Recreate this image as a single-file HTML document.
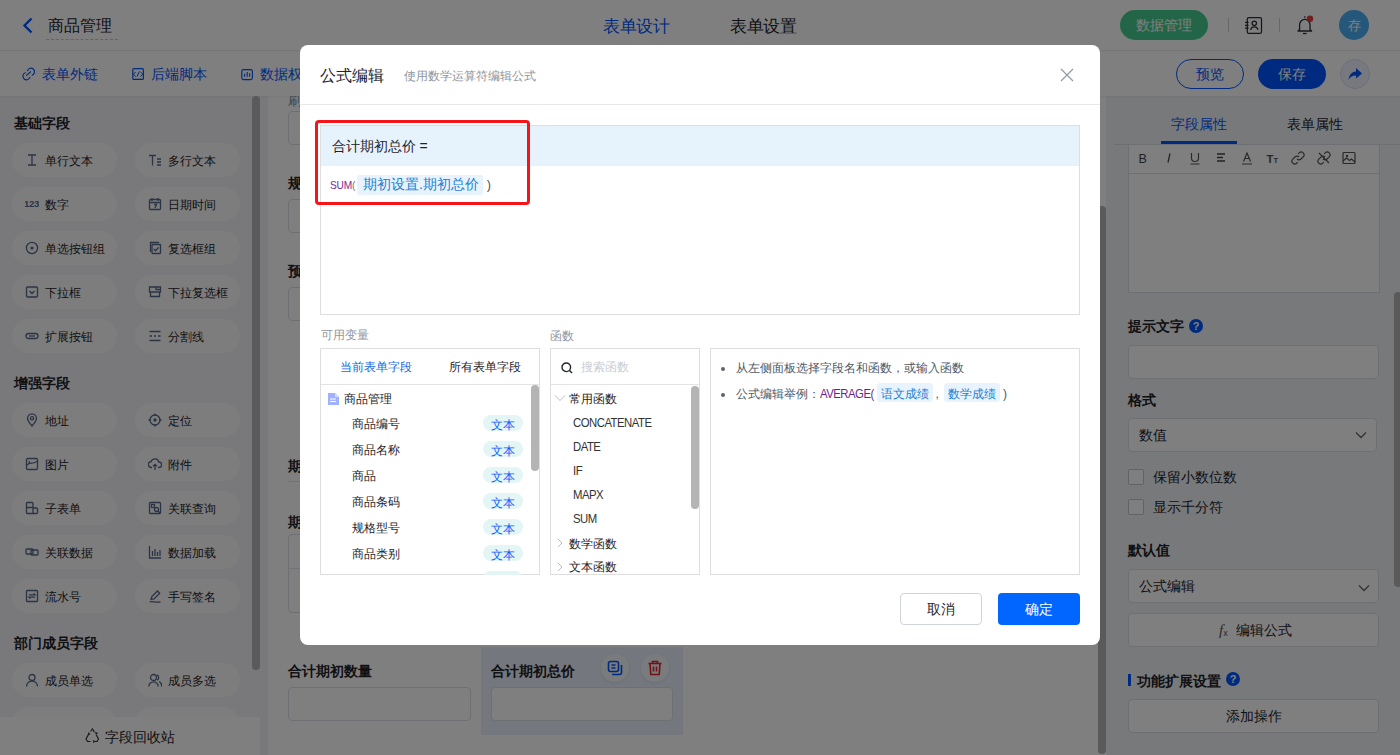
<!DOCTYPE html>
<html><head><meta charset="utf-8">
<style>
*{box-sizing:border-box}
html,body{margin:0;padding:0}
body{width:1400px;height:755px;overflow:hidden;position:relative;background:#fff;font-family:"Liberation Sans",sans-serif;color:#1f2329}
.a{position:absolute;white-space:nowrap}
.t14{font-size:14px;line-height:20px}
.t12{font-size:12px;line-height:20px}
.t16{font-size:16px;line-height:20px}
.b{font-weight:bold}
svg{display:block}
/* header */
#hdr{left:0;top:0;width:1400px;height:51px;background:#fff;border-bottom:1px solid #ececec}
#tb{left:0;top:51px;width:1400px;height:45px;background:#fff;box-shadow:0 1px 2px rgba(0,0,0,.06);z-index:1}
#left{left:0;top:96px;width:268px;height:659px;background:#f2f3f6}
.pill{position:absolute;width:105px;height:34px;border-radius:17px;background:#fbfbfc}
.pill .ic{position:absolute;left:12.5px;top:9.5px}
.pill span{position:absolute;left:33px;top:7.5px;font-size:12px;line-height:20px;color:#1f2329}
.sec{position:absolute;margin-top:-1px;left:14px;font-size:14px;line-height:20px;font-weight:bold;color:#1f2329}
#canvas{left:268px;top:96px;width:838px;height:659px;background:#fff}
#right{left:1106px;top:96px;width:294px;height:659px;background:#f0f2f6}
.inp{position:absolute;border:1px solid #dcdfe6;border-radius:4px;background:#fff}
#mask{left:0;top:0;width:1400px;height:755px;background:rgba(0,0,0,.5);z-index:5}
#modal{left:300px;top:45px;width:800px;height:600px;background:#fff;border-radius:8px;z-index:6}
</style></head><body>

<!-- ============ HEADER ============ -->
<div id="hdr" class="a">
  <svg class="a" style="left:22px;top:17px" width="12" height="17" viewBox="0 0 12 17"><path d="M9.5 1.5 L2.5 8.5 L9.5 15.5" fill="none" stroke="#0055ff" stroke-width="2.4"/></svg>
  <div class="a t16" style="left:48px;top:16px;color:#1f2329">商品管理</div>
  <div class="a" style="left:46px;top:39px;width:72px;border-top:1px dashed #c8c8c8"></div>
  <div class="a t16" style="left:603px;top:16px;color:#0055ff;font-size:16.5px;letter-spacing:-0.4px">表单设计</div>
  <div class="a t16" style="left:730px;top:16px;color:#1f2329;font-size:16.5px;letter-spacing:-0.4px">表单设置</div>
  <div class="a" style="left:1120px;top:10px;width:88px;height:30px;border-radius:15px;background:#45cc8e;color:#fff;font-size:14px;line-height:30px;text-align:center">数据管理</div>
  <div class="a" style="left:1228px;top:18px;width:1px;height:14px;background:#d0d0d0"></div>
  <svg class="a" style="left:1240px;top:10px" width="30" height="30" viewBox="1240 10 30 30" fill="none" stroke="#2b2f36" stroke-width="1.25"><rect x="1247.3" y="17.6" width="14.2" height="15.8" rx="1.5"/><path d="M1245 22.4h3.6M1245 25.3h3.6M1245 28.2h3.6"/><circle cx="1254.3" cy="23.3" r="2.2"/><path d="M1250.6 29.8a3.8 3.8 0 0 1 7.4 0"/></svg>
  <div class="a" style="left:1279px;top:18px;width:1px;height:14px;background:#d0d0d0"></div>
  <svg class="a" style="left:1290px;top:10px" width="30" height="30" viewBox="1290 10 30 30" fill="none" stroke="#2b2f36" stroke-width="1.3"><path d="M1299.6 29.6V24.6a5.2 5.2 0 0 1 10.4 0V29.6l1.6 1.4h-13.6z" stroke-linejoin="round"/><path d="M1303 33.5h3.6"/><path d="M1304.8 16.2v1.6"/><circle cx="1310" cy="18.8" r="3.2" fill="#e23c3c" stroke="none"/></svg>
  <div class="a" style="left:1339px;top:10px;width:30px;height:30px;border-radius:15px;background:#48aef2;color:#fff;font-size:13px;line-height:31px;text-align:center">存</div>
</div>

<!-- ============ TOOLBAR ============ -->
<div id="tb" class="a">
  <svg class="a" style="left:20px;top:14px" width="17" height="17" viewBox="20 65 17 17" fill="none" stroke="#0055ff" stroke-width="1.15" stroke-linecap="round"><path d="M27.5 70.6A3.6 3.6 0 1 1 32.1 75.2"/><path d="M29.9 77.4A3.6 3.6 0 1 1 25.3 72.8"/><path d="M26.6 75.4L30.6 71.8"/></svg>
  <div class="a t14" style="left:42px;top:13px;color:#0055ff">表单外链</div>
  <svg class="a" style="left:130px;top:15px" width="16" height="16" viewBox="130 66 16 16" fill="none" stroke="#0055ff" stroke-width="1.15"><rect x="132.8" y="68.6" width="10.6" height="10.8" rx="1"/><path d="M135.6 72l-2.3 2.3 2.5 2.2M140.5 72l2.4 2.3-2.4 2.1M139.4 71.4l-2.4 5.2" stroke-width="1"/></svg>
  <div class="a t14" style="left:151px;top:13px;color:#0055ff">后端脚本</div>
  <svg class="a" style="left:239px;top:15px" width="16" height="16" viewBox="239 66 16 16" fill="none" stroke="#0055ff" stroke-width="1.15"><rect x="241.8" y="69.6" width="10.6" height="10" rx="1.8"/><path d="M244.6 73.8v3M247.2 72v4.8M249.6 73.2v3.6" stroke-width="1.1"/></svg>
  <div class="a t14" style="left:260px;top:13px;color:#0055ff">数据权限</div>
  <div class="a" style="left:1176px;top:8px;width:68px;height:30px;border-radius:15px;border:1px solid #0055ff;color:#0055ff;font-size:14px;line-height:28px;text-align:center">预览</div>
  <div class="a" style="left:1258px;top:8px;width:68px;height:30px;border-radius:15px;background:#0055ff;color:#fff;font-size:14px;line-height:30px;text-align:center">保存</div>
  <div class="a" style="left:1340px;top:8px;width:30px;height:30px;border-radius:15px;border:1px solid #d5dff2;background:#eef3fe"></div>
  <svg class="a" style="left:1347px;top:15px" width="16" height="16" viewBox="0 0 16 16"><path d="M9 2 L15 7.5 L9 12.5 V9.5 C5 9.5 3 11 1.5 14 C2 9 4.5 5.8 9 5.5 Z" fill="#0055ff"/></svg>
</div>

<!-- ============ LEFT PANEL ============ -->
<div id="left" class="a">
<div class="sec" style="top:18px">基础字段</div>
<div class="pill" style="left:12px;top:47px"><svg class="ic" width="14" height="14" viewBox="0 0 14 14" fill="none" stroke="#56688a" stroke-width="1.3"><path d="M3 2h8M3 12h8M7 2v10"/></svg><span>单行文本</span></div>
<div class="pill" style="left:135px;top:47px"><svg class="ic" width="14" height="14" viewBox="0 0 14 14" fill="none" stroke="#56688a" stroke-width="1.3"><path d="M1 2.5h7M4.5 2.5v10M9 6h4M9 9h4M9 12h4"/></svg><span>多行文本</span></div>
<div class="pill" style="left:12px;top:91px"><svg class="ic" width="14" height="14" viewBox="0 0 14 14" fill="none" stroke="#56688a" stroke-width="1.3"><text x="-1" y="9.8" font-size="9.6" font-weight="bold" letter-spacing="-0.3" fill="#56688a" stroke="none" font-family="Liberation Sans">123</text></svg><span>数字</span></div>
<div class="pill" style="left:135px;top:91px"><svg class="ic" width="14" height="14" viewBox="0 0 14 14" fill="none" stroke="#56688a" stroke-width="1.3"><rect x="1.5" y="2.5" width="11" height="10" rx="1"/><path d="M4 1v3M10 1v3M1.5 5.5h11M6 7.5h2.5L7 11"/></svg><span>日期时间</span></div>
<div class="pill" style="left:12px;top:135px"><svg class="ic" width="14" height="14" viewBox="0 0 14 14" fill="none" stroke="#56688a" stroke-width="1.3"><circle cx="7" cy="7" r="5.6"/><circle cx="7" cy="7" r="1.6" fill="#56688a" stroke="none"/></svg><span>单选按钮组</span></div>
<div class="pill" style="left:135px;top:135px"><svg class="ic" width="14" height="14" viewBox="0 0 14 14" fill="none" stroke="#56688a" stroke-width="1.3"><path d="M2.5 11V1.5H11"/><rect x="4" y="3.5" width="8.5" height="9" rx="0.5"/><path d="M5.8 8l1.8 1.8 3-3.4"/></svg><span>复选框组</span></div>
<div class="pill" style="left:12px;top:179px"><svg class="ic" width="14" height="14" viewBox="0 0 14 14" fill="none" stroke="#56688a" stroke-width="1.3"><rect x="1.5" y="2" width="11" height="10" rx="1"/><path d="M4.5 6l2.5 2.5L9.5 6"/></svg><span>下拉框</span></div>
<div class="pill" style="left:135px;top:179px"><svg class="ic" width="14" height="14" viewBox="0 0 14 14" fill="none" stroke="#56688a" stroke-width="1.3"><path d="M1.5 2h11v5h-11zM2.5 7v4.5h9V7"/><path d="M8 2v2.5h4.5"/></svg><span>下拉复选框</span></div>
<div class="pill" style="left:12px;top:223px"><svg class="ic" width="14" height="14" viewBox="0 0 14 14" fill="none" stroke="#56688a" stroke-width="1.3"><rect x="1" y="4.5" width="12" height="5" rx="2.5"/><path d="M4 7h6"/></svg><span>扩展按钮</span></div>
<div class="pill" style="left:135px;top:223px"><svg class="ic" width="14" height="14" viewBox="0 0 14 14" fill="none" stroke="#56688a" stroke-width="1.3"><path d="M1.5 2.5h11M1.5 11.5h11M1.5 7h2.5M6 7h2M10 7h2.5"/></svg><span>分割线</span></div>
<div class="sec" style="top:278px">增强字段</div>
<div class="pill" style="left:12px;top:307px"><svg class="ic" width="14" height="14" viewBox="0 0 14 14" fill="none" stroke="#56688a" stroke-width="1.3"><path d="M7 13C3.5 9 2.5 7.3 2.5 5.3a4.5 4.5 0 0 1 9 0c0 2-1 3.7-4.5 7.7z"/><circle cx="7" cy="5.3" r="1.6"/></svg><span>地址</span></div>
<div class="pill" style="left:135px;top:307px"><svg class="ic" width="14" height="14" viewBox="0 0 14 14" fill="none" stroke="#56688a" stroke-width="1.3"><circle cx="7" cy="7" r="5"/><path d="M7 0.5v2.5M7 11v2.5M0.5 7H3M11 7h2.5"/><circle cx="7" cy="7" r="1" fill="#56688a"/></svg><span>定位</span></div>
<div class="pill" style="left:12px;top:351px"><svg class="ic" width="14" height="14" viewBox="0 0 14 14" fill="none" stroke="#56688a" stroke-width="1.3"><rect x="1.5" y="1.5" width="11" height="11" rx="1.2"/><path d="M1.5 8.2L4.5 6.2Q8 6.8 12.5 4.3M4.3 4v2.2"/></svg><span>图片</span></div>
<div class="pill" style="left:135px;top:351px"><svg class="ic" width="14" height="14" viewBox="0 0 14 14" fill="none" stroke="#56688a" stroke-width="1.3"><path d="M4 10.5H3.5a3 3 0 0 1-.3-6 4 4 0 0 1 7.7.5 2.7 2.7 0 0 1 0 5.5H10"/><path d="M7 13V7.5M5 9.3L7 7.3l2 2"/></svg><span>附件</span></div>
<div class="pill" style="left:12px;top:395px"><svg class="ic" width="14" height="14" viewBox="0 0 14 14" fill="none" stroke="#56688a" stroke-width="1.3"><path d="M8 12.5H2.5a1 1 0 0 1-1-1v-9a1 1 0 0 1 1-1h4.5a1 1 0 0 1 1 1v10z"/><path d="M1.5 6.5H8M8 7h3.5a1 1 0 0 1 1 1v3.5a1 1 0 0 1-1 1H8"/></svg><span>子表单</span></div>
<div class="pill" style="left:135px;top:395px"><svg class="ic" width="14" height="14" viewBox="0 0 14 14" fill="none" stroke="#56688a" stroke-width="1.3"><rect x="1.5" y="1.5" width="11" height="11" rx="1"/><rect x="3.5" y="3.5" width="3" height="3"/><circle cx="8.5" cy="8.5" r="2"/><path d="M10 10l2 2"/></svg><span>关联查询</span></div>
<div class="pill" style="left:12px;top:439px"><svg class="ic" width="14" height="14" viewBox="0 0 14 14" fill="none" stroke="#56688a" stroke-width="1.3"><rect x="1" y="4" width="7" height="5" rx="1"/><rect x="6" y="5" width="7" height="5" rx="1"/></svg><span>关联数据</span></div>
<div class="pill" style="left:135px;top:439px"><svg class="ic" width="14" height="14" viewBox="0 0 14 14" fill="none" stroke="#56688a" stroke-width="1.3"><path d="M1.5 1v12h11.5M4.5 6v5M7 4v7M9.5 7v4M12 5v6"/></svg><span>数据加载</span></div>
<div class="pill" style="left:12px;top:483px"><svg class="ic" width="14" height="14" viewBox="0 0 14 14" fill="none" stroke="#56688a" stroke-width="1.3"><rect x="1.5" y="1.5" width="11" height="11" rx="1"/><path d="M4 5.8h6L8.6 4.5M10 8.2H4l1.4 1.3"/></svg><span>流水号</span></div>
<div class="pill" style="left:135px;top:483px"><svg class="ic" width="14" height="14" viewBox="0 0 14 14" fill="none" stroke="#56688a" stroke-width="1.3"><path d="M3 10.5l.8-3L9.5 2l2.2 2.2L6 10z"/><path d="M1.5 13c3-1 4 .5 11 0"/></svg><span>手写签名</span></div>
<div class="sec" style="top:538px">部门成员字段</div>
<div class="pill" style="left:12px;top:567px"><svg class="ic" width="14" height="14" viewBox="0 0 14 14" fill="none" stroke="#56688a" stroke-width="1.3"><circle cx="7" cy="4.5" r="3"/><path d="M1.5 13.5a5.5 5.5 0 0 1 11 0"/></svg><span>成员单选</span></div>
<div class="pill" style="left:135px;top:567px"><svg class="ic" width="14" height="14" viewBox="0 0 14 14" fill="none" stroke="#56688a" stroke-width="1.3"><circle cx="5.5" cy="4.5" r="3"/><path d="M0.8 13.5a4.7 4.7 0 0 1 9.4 0M9 1.8a3 3 0 0 1 0 5.4M11 8.5a4.7 4.7 0 0 1 2.5 5"/></svg><span>成员多选</span></div>
<div class="pill" style="left:12px;top:611px"><span>部门单选</span></div>
<div class="pill" style="left:135px;top:611px"><span>部门多选</span></div>
<div class="a" style="left:252px;top:0;width:8px;height:574px;border-radius:4px;background:#b4b4b4"></div>
<div class="a" style="left:0;top:621px;width:260px;height:38px;background:#fff"></div>
<svg class="a" style="left:85px;top:632px" width="15" height="15" viewBox="0 0 15 15" fill="none" stroke="#333" stroke-width="1.2"><path d="M5.5 3.5L7.5 1l2 3.3M11 6.5l2.5 4.5-1.5 2.5H9M5.5 13.5H2.5L1 11l2.2-4"/><path d="M8.3 12.3l.9 1.2-.9 1.1M12.8 5l-1.6.6-.6-1.5M3.5 4.5l.9 1.6-1.6.5"/></svg>
<div class="a t14" style="left:105px;top:631px;color:#1f2329">字段回收站</div>
</div>

<!-- ============ CANVAS ============ -->
<div id="canvas" class="a" style="overflow:hidden">
<div class="a" style="left:20px;top:-6.3px;font-size:14px;line-height:20px;color:#86909c">刷新规则</div>
<div class="inp" style="left:20px;top:15px;width:500px;height:34px;"></div>
<div class="a" style="left:20px;top:77.2px;font-size:14px;line-height:20px;font-weight:bold;color:#1f2329">规格型号</div>
<div class="inp" style="left:20px;top:103px;width:500px;height:34px;"></div>
<div class="a" style="left:20px;top:165.2px;font-size:14px;line-height:20px;font-weight:bold;color:#1f2329">预计到货</div>
<div class="inp" style="left:20px;top:191px;width:500px;height:34px;"></div>
<div class="a" style="left:20px;top:360.2px;font-size:14px;line-height:20px;font-weight:bold;color:#1f2329">期初设置</div>
<div class="a" style="left:20px;top:385px;width:790px;height:1px;background:#e5e6eb"></div>
<div class="a" style="left:20px;top:415.7px;font-size:14px;line-height:20px;font-weight:bold;color:#1f2329">期初明细</div>
<div class="inp" style="left:20px;top:438px;width:790px;height:79px;"></div>
<div class="a" style="left:21px;top:472px;width:788px;height:1px;background:#e5e6eb"></div>
<div class="a" style="left:213px;top:551px;width:202px;height:88px;background:#e8effc"></div>
<div class="a" style="left:20px;top:564.7px;font-size:14px;line-height:20px;font-weight:bold;color:#1f2329">合计期初数量</div>
<div class="inp" style="left:20px;top:591px;width:183px;height:34px;"></div>
<div class="a" style="left:223px;top:564.7px;font-size:14px;line-height:20px;font-weight:bold;color:#1f2329">合计期初总价</div>
<div class="inp" style="left:223px;top:591px;width:182px;height:34px;"></div>
<div class="a" style="left:333px;top:558px;width:28px;height:28px;border-radius:14px;background:#f4f6fa;box-shadow:0 1px 3px rgba(0,0,0,.08)"></div>
<svg class="a" style="left:339px;top:564px" width="16" height="16" viewBox="0 0 16 16" fill="none" stroke="#0055ff" stroke-width="1.6"><rect x="1.5" y="1.5" width="10" height="10" rx="2"/><path d="M4.5 5h4M4.5 8h4"/><path d="M14.5 5v7.5a2 2 0 0 1-2 2H5"/></svg>
<div class="a" style="left:373px;top:558px;width:28px;height:28px;border-radius:14px;background:#f4f6fa;box-shadow:0 1px 3px rgba(0,0,0,.08)"></div>
<svg class="a" style="left:379px;top:564px" width="16" height="16" viewBox="0 0 16 16" fill="none" stroke="#e0262f" stroke-width="1.6"><path d="M1.5 3.5h13M5.5 3.5V1.5h5v2M3 3.5l.8 11h8.4l.8-11M6.5 6.5v5M9.5 6.5v5"/></svg>
<div class="a" style="left:830px;top:110px;width:8px;height:548px;border-radius:4px;background:#b4b4b4"></div>
</div>

<!-- ============ RIGHT PANEL ============ -->
<div id="right" class="a" style="overflow:hidden">
<div class="a" style="left:65.4px;top:18.3px;font-size:14px;line-height:20px;color:#0055ff">字段属性</div>
<div class="a" style="left:181.0px;top:18.3px;font-size:14px;line-height:20px;color:#1f2329">表单属性</div>
<div class="a" style="left:8px;top:48px;width:286px;height:1px;background:#dcdfe6"></div>
<div class="a" style="left:55px;top:45px;width:76px;height:3px;background:#0055ff"></div>
<div class="a" style="left:22px;top:49px;width:252px;height:148px;border:1px solid #dcdfe6;border-top:none;background:#fff"></div>
<div class="a" style="left:22px;top:49px;width:252px;height:29px;border:1px solid #dcdfe6;border-top:none;background:#fff"></div>
<svg class="a" style="left:31px;top:55px" width="14" height="14" viewBox="0 0 14 14"><text x="1.5" y="12" font-size="12.5" fill="#444" font-family="Liberation Sans">B</text></svg>
<svg class="a" style="left:56px;top:55px" width="14" height="14" viewBox="0 0 14 14"><path d="M8 2.5L6 11.5" stroke="#555" stroke-width="1.4"/></svg>
<svg class="a" style="left:82px;top:55px" width="14" height="14" viewBox="0 0 14 14"><path d="M3.5 2v5a3.5 3.5 0 0 0 7 0V2M2.5 13h9" stroke="#555" stroke-width="1.2" fill="none"/></svg>
<svg class="a" style="left:108px;top:55px" width="14" height="14" viewBox="0 0 14 14"><path d="M3 3h8M3 6.5h6M3 10h8" stroke="#444" stroke-width="1.3"/></svg>
<svg class="a" style="left:134px;top:55px" width="14" height="14" viewBox="0 0 14 14"><path d="M3.5 10.5L7 2l3.5 8.5M4.8 7.5h4.4M2 13h10" stroke="#555" stroke-width="1.2" fill="none"/></svg>
<svg class="a" style="left:160px;top:55px" width="14" height="14" viewBox="0 0 14 14"><text x="0.5" y="11.5" font-size="11.5" fill="#555" font-family="Liberation Sans" font-weight="bold">T</text><text x="7.5" y="12" font-size="7.5" fill="#555" font-family="Liberation Sans" font-weight="bold">T</text></svg>
<svg class="a" style="left:185px;top:55px" width="14" height="14" viewBox="0 0 14 14"><path d="M6 8a2.8 2.8 0 0 0 4 0l2.2-2.2a2.8 2.8 0 0 0-4-4L7.2 2.8M8 6a2.8 2.8 0 0 0-4 0L1.8 8.2a2.8 2.8 0 0 0 4 4l1-1" stroke="#555" stroke-width="1.2" fill="none"/></svg>
<svg class="a" style="left:211px;top:55px" width="14" height="14" viewBox="0 0 14 14"><path d="M6 8a2.8 2.8 0 0 0 4 0l2.2-2.2a2.8 2.8 0 0 0-4-4L7.2 2.8M8 6a2.8 2.8 0 0 0-4 0L1.8 8.2a2.8 2.8 0 0 0 4 4l1-1M2 2l10 10" stroke="#555" stroke-width="1.2" fill="none"/></svg>
<svg class="a" style="left:236px;top:55px" width="14" height="14" viewBox="0 0 14 14"><rect x="1" y="1.5" width="12" height="11" rx="1" stroke="#555" stroke-width="1.2" fill="none"/><path d="M1 10l3.5-3 3 2.5 2-1.5 3.5 3" stroke="#555" stroke-width="1.2" fill="none"/><circle cx="5" cy="5" r="1.2" fill="#555"/></svg>
<div class="a" style="left:22.0px;top:220.2px;font-size:14px;line-height:20px;font-weight:bold;color:#1f2329">提示文字</div>
<div class="a" style="left:83px;top:223px;width:14px;height:14px;border-radius:7px;background:#0055ff;color:#fff;font-size:11px;line-height:14px;text-align:center;font-weight:bold">?</div>
<div class="inp" style="left:22px;top:249px;width:251px;height:34px;"></div>
<div class="a" style="left:22.0px;top:293.8px;font-size:14px;line-height:20px;font-weight:bold;color:#1f2329">格式</div>
<div class="inp" style="left:22px;top:322px;width:249px;height:34px;"></div>
<div class="a" style="left:33.0px;top:328.5px;font-size:14px;line-height:20px;color:#1f2329">数值</div>
<svg class="a" style="left:249px;top:335px" width="12" height="8" viewBox="0 0 12 8"><path d="M1 1.5l5 5 5-5" fill="none" stroke="#666" stroke-width="1.3"/></svg>
<div class="a" style="left:22px;top:373px;width:16px;height:16px;border:1px solid #c0c4cc;border-radius:2px;background:#fff"></div>
<div class="a" style="left:46.5px;top:371.4px;font-size:14px;line-height:20px;color:#1f2329">保留小数位数</div>
<div class="a" style="left:22px;top:403px;width:16px;height:16px;border:1px solid #c0c4cc;border-radius:2px;background:#fff"></div>
<div class="a" style="left:46.5px;top:401.4px;font-size:14px;line-height:20px;color:#1f2329">显示千分符</div>
<div class="a" style="left:22.0px;top:444.4px;font-size:14px;line-height:20px;font-weight:bold;color:#1f2329">默认值</div>
<div class="inp" style="left:22px;top:473px;width:251px;height:34px;"></div>
<div class="a" style="left:33.0px;top:479.7px;font-size:14px;line-height:20px;color:#1f2329">公式编辑</div>
<svg class="a" style="left:252px;top:488px" width="12" height="8" viewBox="0 0 12 8"><path d="M1 1.5l5 5 5-5" fill="none" stroke="#666" stroke-width="1.3"/></svg>
<div class="inp" style="left:22px;top:517px;width:251px;height:34px;"></div>
<div class="a" style="left:113px;top:524px;font-family:'Liberation Serif',serif;font-style:italic;font-size:15px;line-height:20px;color:#555">f<span style="font-size:9px;font-style:normal;font-family:'Liberation Sans';vertical-align:-1px">x</span></div>
<div class="a" style="left:129.5px;top:524.0px;font-size:14px;line-height:20px;color:#1f2329">编辑公式</div>
<div class="a" style="left:22px;top:578px;width:3px;height:12px;background:#0055ff"></div>
<div class="a" style="left:31.0px;top:574.7px;font-size:14px;line-height:20px;font-weight:bold;color:#1f2329">功能扩展设置</div>
<div class="a" style="left:120px;top:576px;width:14px;height:14px;border-radius:7px;background:#0055ff;color:#fff;font-size:11px;line-height:14px;text-align:center;font-weight:bold">?</div>
<div class="inp" style="left:22px;top:603px;width:251px;height:34px;"></div>
<div class="a" style="left:120.0px;top:610.2px;font-size:14px;line-height:20px;color:#1f2329">添加操作</div>
<div class="a" style="left:288px;top:196px;width:8px;height:295px;border-radius:4px;background:#b4b4b4"></div>
</div>

<div id="mask" class="a"></div>

<!-- ============ MODAL ============ -->
<div id="modal" class="a" style="overflow:hidden">
<div class="a" style="left:0;top:-1px;width:800px;height:601px">
<div class="a" style="left:20.4px;top:21.8px;font-size:16px;line-height:20px;color:#1f2329;">公式编辑</div>
<div class="a" style="left:104.4px;top:22.1px;font-size:12px;line-height:20px;color:#8f959e;">使用数学运算符编辑公式</div>
<svg class="a" style="left:760px;top:24px" width="14" height="14" viewBox="0 0 14 14"><path d="M1 1l12 12M13 1L1 13" stroke="#9298a0" stroke-width="1.2"/></svg>
<div class="a" style="left:0px;top:60px;width:800px;height:1px;background:#e8e8e8"></div>
<div class="a" style="left:20px;top:81px;width:760px;height:190px;border:1px solid #dedede;background:#fff"></div>
<div class="a" style="left:21px;top:82px;width:758px;height:40px;background:#e6f3fd"></div>
<div class="a" style="left:31.6px;top:92.1px;font-size:14px;line-height:20px;color:#1f2329;">合计期初总价 =</div>
<div class="a" style="left:30px;top:132px;font-size:10.2px;line-height:20px;color:#7c2b93;letter-spacing:-0.2px">SUM<span style="color:#777">(</span></div>
<div class="a" style="left:57px;top:131px;width:126px;height:20px;background:#e8f3fd;border-radius:2px"></div>
<div class="a" style="left:63.0px;top:130.1px;font-size:14px;line-height:20px;color:#1b7fd4;">期初设置.期初总价</div>
<div class="a" style="left:185px;top:131.5px;font-family:'Liberation Mono',monospace;font-size:12px;line-height:20px;color:#555">)</div>
<div class="a" style="left:15px;top:76px;width:215px;height:85px;border:3px solid #f5141a;border-radius:4px"></div>
<div class="a" style="left:20.6px;top:280.8px;font-size:12px;line-height:20px;color:#8f959e;">可用变量</div>
<div class="a" style="left:20px;top:304px;width:220px;height:227px;border:1px solid #dedede"></div>
<div class="a" style="left:40.0px;top:313.3px;font-size:12px;line-height:20px;color:#1668e3;">当前表单字段</div>
<div class="a" style="left:148.5px;top:313.3px;font-size:12px;line-height:20px;color:#1f2329;">所有表单字段</div>
<div class="a" style="left:21px;top:340px;width:218px;height:1px;background:#e3e3e3"></div>
<div class="a" style="left:231px;top:341px;width:8px;height:86px;background:#b4b4b4;border-radius:4px"></div>
<svg class="a" style="left:28px;top:349px" width="11" height="12" viewBox="0 0 11 12"><path d="M0 0h7l4 4v8H0z" fill="#9fb1ff"/><path d="M2 6h6M2 8.5h6" stroke="#fff" stroke-width="1.1"/><path d="M7 0v4h4" fill="#d5ddff"/></svg>
<div class="a" style="left:44.3px;top:344.7px;font-size:12px;line-height:20px;color:#1f2329;">商品管理</div>
<div class="a" style="left:52.2px;top:370.3px;font-size:12px;line-height:20px;color:#1f2329;">商品编号</div>
<div class="a" style="left:183px;top:371px;width:40px;height:16px;background:#e3f6f5;border-radius:8px"></div>
<div class="a" style="left:191.0px;top:370.8px;font-size:12px;line-height:20px;color:#0f62fe;">文本</div>
<div class="a" style="left:52.2px;top:396.3px;font-size:12px;line-height:20px;color:#1f2329;">商品名称</div>
<div class="a" style="left:183px;top:397px;width:40px;height:16px;background:#e3f6f5;border-radius:8px"></div>
<div class="a" style="left:191.0px;top:396.8px;font-size:12px;line-height:20px;color:#0f62fe;">文本</div>
<div class="a" style="left:52.2px;top:422.3px;font-size:12px;line-height:20px;color:#1f2329;">商品</div>
<div class="a" style="left:183px;top:423px;width:40px;height:16px;background:#e3f6f5;border-radius:8px"></div>
<div class="a" style="left:191.0px;top:422.8px;font-size:12px;line-height:20px;color:#0f62fe;">文本</div>
<div class="a" style="left:52.2px;top:448.3px;font-size:12px;line-height:20px;color:#1f2329;">商品条码</div>
<div class="a" style="left:183px;top:449px;width:40px;height:16px;background:#e3f6f5;border-radius:8px"></div>
<div class="a" style="left:191.0px;top:448.8px;font-size:12px;line-height:20px;color:#0f62fe;">文本</div>
<div class="a" style="left:52.2px;top:474.3px;font-size:12px;line-height:20px;color:#1f2329;">规格型号</div>
<div class="a" style="left:183px;top:475px;width:40px;height:16px;background:#e3f6f5;border-radius:8px"></div>
<div class="a" style="left:191.0px;top:474.8px;font-size:12px;line-height:20px;color:#0f62fe;">文本</div>
<div class="a" style="left:52.2px;top:500.3px;font-size:12px;line-height:20px;color:#1f2329;">商品类别</div>
<div class="a" style="left:183px;top:501px;width:40px;height:16px;background:#e3f6f5;border-radius:8px"></div>
<div class="a" style="left:191.0px;top:500.8px;font-size:12px;line-height:20px;color:#0f62fe;">文本</div>
<div class="a" style="left:183px;top:527px;width:40px;height:16px;background:#e3f6f5;border-radius:8px"></div>
<div class="a" style="left:21px;top:531px;width:218px;height:30px;background:#fff"></div>
<div class="a" style="left:250.2px;top:281.5px;font-size:12px;line-height:20px;color:#8f959e;">函数</div>
<div class="a" style="left:250px;top:304px;width:150px;height:227px;border:1px solid #dedede"></div>
<svg class="a" style="left:261px;top:318px" width="12" height="12" viewBox="0 0 12 12"><circle cx="5.3" cy="5.3" r="4.3" fill="none" stroke="#1f2329" stroke-width="1.4"/><path d="M8.5 8.5l2.5 2.5" stroke="#1f2329" stroke-width="1.4"/></svg>
<div class="a" style="left:281.0px;top:312.9px;font-size:12px;line-height:20px;color:#c9cdd4;">搜索函数</div>
<div class="a" style="left:251px;top:340px;width:148px;height:1px;background:#e3e3e3"></div>
<div class="a" style="left:391px;top:342px;width:8px;height:123px;background:#b4b4b4;border-radius:4px"></div>
<svg class="a" style="left:254px;top:350px" width="12" height="8" viewBox="0 0 12 8"><path d="M1 1.5l5 5 5-5" fill="none" stroke="#b8bcc4" stroke-width="1"/></svg>
<div class="a" style="left:269.3px;top:344.5px;font-size:12px;line-height:20px;color:#1f2329;">常用函数</div>
<div class="a" style="left:273px;top:368.7px;font-size:12.6px;line-height:20px;color:#333;letter-spacing:-0.55px;transform:scaleX(0.9);transform-origin:0 0">CONCATENATE</div>
<div class="a" style="left:273px;top:392.7px;font-size:12.6px;line-height:20px;color:#333;letter-spacing:-0.55px;transform:scaleX(0.9);transform-origin:0 0">DATE</div>
<div class="a" style="left:273px;top:416.7px;font-size:12.6px;line-height:20px;color:#333;letter-spacing:-0.55px;transform:scaleX(0.9);transform-origin:0 0">IF</div>
<div class="a" style="left:273px;top:440.7px;font-size:12.6px;line-height:20px;color:#333;letter-spacing:-0.55px;transform:scaleX(0.9);transform-origin:0 0">MAPX</div>
<div class="a" style="left:273px;top:464.7px;font-size:12.6px;line-height:20px;color:#333;letter-spacing:-0.55px;transform:scaleX(0.9);transform-origin:0 0">SUM</div>
<svg class="a" style="left:257px;top:494.4px" width="6" height="10" viewBox="0 0 6 10"><path d="M1 1l4 4-4 4" fill="none" stroke="#b8bcc4" stroke-width="1"/></svg>
<div class="a" style="left:269.2px;top:489.7px;font-size:12px;line-height:20px;color:#1f2329;">数学函数</div>
<svg class="a" style="left:257px;top:517.6px" width="6" height="10" viewBox="0 0 6 10"><path d="M1 1l4 4-4 4" fill="none" stroke="#b8bcc4" stroke-width="1"/></svg>
<div class="a" style="left:269.2px;top:512.9px;font-size:12px;line-height:20px;color:#1f2329;">文本函数</div>
<div class="a" style="left:410px;top:304px;width:370px;height:227px;border:1px solid #dedede"></div>
<div class="a" style="left:421px;top:323px;width:4px;height:4px;background:#5c6370;border-radius:2px"></div>
<div class="a" style="left:435.9px;top:313.7px;font-size:12px;line-height:20px;color:#4e5969;">从左侧面板选择字段名和函数，或输入函数</div>
<div class="a" style="left:421px;top:348.5px;width:4px;height:4px;background:#5c6370;border-radius:2px"></div>
<div class="a" style="left:435.9px;top:340.0px;font-size:12px;line-height:20px;color:#4e5969;">公式编辑举例：</div>
<div class="a" style="left:520px;top:340px;font-size:12.6px;line-height:20px;color:#6e1f8f;letter-spacing:-0.55px;transform:scaleX(0.9);transform-origin:0 0">AVERAGE(</div>
<div class="a" style="left:577px;top:339px;width:56px;height:19px;background:#e8f3fd;border-radius:3px"></div>
<div class="a" style="left:581.0px;top:340.0px;font-size:12px;line-height:20px;color:#1b7fd4;">语文成绩</div>
<div class="a" style="left:635.5px;top:340.0px;font-size:12px;line-height:20px;color:#4e5969;">,</div>
<div class="a" style="left:644px;top:339px;width:56px;height:19px;background:#e8f3fd;border-radius:3px"></div>
<div class="a" style="left:648.0px;top:340.0px;font-size:12px;line-height:20px;color:#1b7fd4;">数学成绩</div>
<div class="a" style="left:703.0px;top:340.0px;font-size:12px;line-height:20px;color:#4e5969;">)</div>
<div class="a" style="left:600px;top:549px;width:82px;height:32px;border:1px solid #d0d3d9;border-radius:4px;background:#fff"></div>
<div class="a" style="left:600px;top:549px;width:82px;height:32px;font-size:14px;line-height:32px;text-align:center;color:#1f2329">取消</div>
<div class="a" style="left:698px;top:549px;width:82px;height:32px;background:#0066ff;border-radius:4px"></div>
<div class="a" style="left:698px;top:549px;width:82px;height:32px;font-size:14px;line-height:32px;text-align:center;color:#fff">确定</div>
</div>
</div>

</body></html>
